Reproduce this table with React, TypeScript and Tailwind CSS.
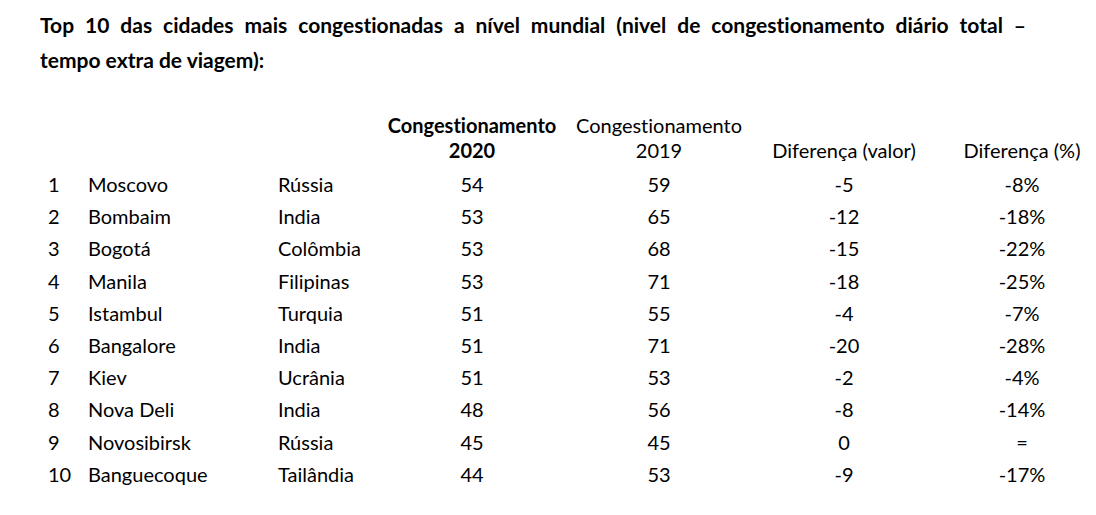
const rows = [
  ["1", "Moscovo", "Rússia", "54", "59", "-5", "-8%"],
  ["2", "Bombaim", "India", "53", "65", "-12", "-18%"],
  ["3", "Bogotá", "Colômbia", "53", "68", "-15", "-22%"],
  ["4", "Manila", "Filipinas", "53", "71", "-18", "-25%"],
  ["5", "Istambul", "Turquia", "51", "55", "-4", "-7%"],
  ["6", "Bangalore", "India", "51", "71", "-20", "-28%"],
  ["7", "Kiev", "Ucrânia", "51", "53", "-2", "-4%"],
  ["8", "Nova Deli", "India", "48", "56", "-8", "-14%"],
  ["9", "Novosibirsk", "Rússia", "45", "45", "0", "="],
  ["10", "Banguecoque", "Tailândia", "44", "53", "-9", "-17%"],
];

const cols = "grid grid-cols-[40px_190px_102px_184px_190px_180px_162px]";

export default function App() {
  return (
    <div className="w-[1096px] h-[515px] bg-white text-black font-['Lato',sans-serif] [font-variant-ligatures:none] overflow-hidden">
      {/* title */}
      <div className="pl-[40px] pt-[7px] w-[1026px] text-[21px] leading-[35px] font-bold">
        <p className="text-justify [text-align-last:justify]">
          Top 10 das cidades mais congestionadas a nível mundial (nivel de congestionamento diário total –
        </p>
        <p>tempo extra de viagem):</p>
      </div>

      {/* table */}
      <div className="pl-[48px] mt-[36px] text-[20px]">
        <div className={`${cols} leading-[25px] mb-[5px]`}>
          <div />
          <div />
          <div />
          <div className="text-center font-bold">
            Congestionamento
            <br />
            2020
          </div>
          <div className="text-center">
            Congestionamento
            <br />
            2019
          </div>
          <div className="text-center self-end">Diferença (valor)</div>
          <div className="text-center self-end pl-[14px]">Diferença (%)</div>
        </div>

        {rows.map((r) => (
          <div key={r[0]} className={`${cols} h-[32.2px] leading-[32.2px]`}>
            <div>{r[0]}</div>
            <div>{r[1]}</div>
            <div>{r[2]}</div>
            <div className="text-center">{r[3]}</div>
            <div className="text-center">{r[4]}</div>
            <div className="text-center">{r[5]}</div>
            <div className="text-center pl-[14px]">{r[6]}</div>
          </div>
        ))}
      </div>
    </div>
  );
}
